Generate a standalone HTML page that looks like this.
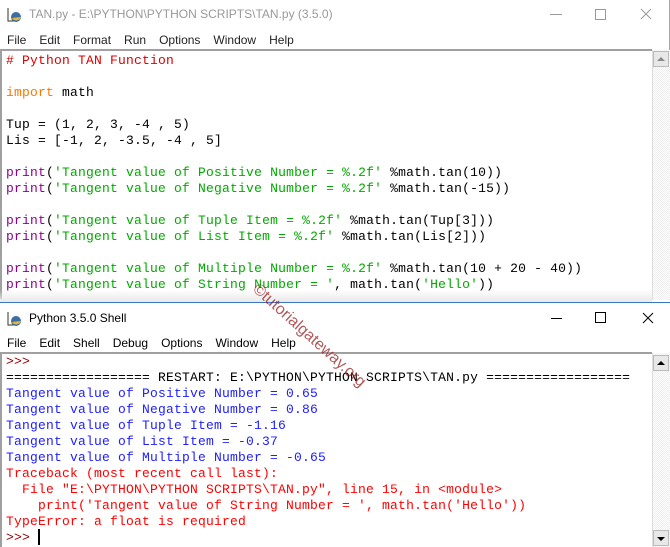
<!DOCTYPE html>
<html><head><meta charset="utf-8"><style>
*{margin:0;padding:0;box-sizing:border-box}
body{width:670px;height:547px;overflow:hidden;background:#fff;position:relative;font-family:"Liberation Sans",sans-serif}
.abs{position:absolute}
.title{font-size:12px;white-space:nowrap}
.menu{font-size:12px;white-space:nowrap}
.menu span{margin-right:13px}
.code{font-family:"Liberation Mono",monospace;font-size:13px;letter-spacing:0.2px;white-space:pre;line-height:16px}
.k{color:#ff7700}.s{color:#00aa00}.b{color:#900090}.c{color:#dd0000}
.o{color:#2020ff}.e{color:#ff0000}.p{color:#a00000}
.sb{background:repeating-conic-gradient(#eee 0 25%,#fff 0 50%) 0 0/2px 2px;border-left:1px solid #ddd}
.btn{background:#e8e8e8;border:1px solid #bbb;width:16px;height:16px}
</style></head><body>
<div class="abs" style="left:0;top:0;width:670px;height:300px;background:#fff;border-right:1px solid #aaa"></div>
<svg class="abs" style="left:6px;top:6px" width="16" height="18"><path d="M2 2 L2 15 L9 15" stroke="#333" fill="none"/><circle cx="10" cy="11" r="5" fill="#3a6ea5"/><path d="M6 12 A5 5 0 0 0 15 11 Z" fill="#e8b830"/></svg>
<div class="abs title" style="left:29px;top:7px;color:#999">TAN.py - E:\PYTHON\PYTHON SCRIPTS\TAN.py (3.5.0)</div>
<div class="abs" style="left:550px;top:14px;width:12px;height:1px;background:#999"></div>
<div class="abs" style="left:595px;top:9px;width:11px;height:11px;border:1px solid #999"></div>
<svg class="abs" style="left:640px;top:8px" width="12" height="12"><path d="M1 1L11 11M11 1L1 11" stroke="#999"/></svg>
<div class="abs menu" style="left:7px;top:33px;color:#222"><span>File</span><span>Edit</span><span>Format</span><span>Run</span><span>Options</span><span>Window</span><span>Help</span></div>
<div class="abs" style="left:0;top:49px;width:652px;height:2px;background:#a0a0a0"></div>
<div class="abs" style="left:0;top:49px;width:2px;height:250px;background:#a0a0a0"></div>
<div class="abs sb" style="left:652px;top:50px;width:18px;height:250px"></div>
<div class="abs btn" style="left:653px;top:51px"></div>
<svg class="abs" style="left:656px;top:56px" width="10" height="6"><path d="M1 5L5 1L9 5Z" fill="#888"/></svg>
<div class="abs code" style="left:6px;top:53px"><span class="c"># Python TAN Function</span>

<span class="k">import</span> math

Tup = (1, 2, 3, -4 , 5)
Lis = [-1, 2, -3.5, -4 , 5]

<span class="b">print</span>(<span class="s">'Tangent value of Positive Number = %.2f'</span> %math.tan(10))
<span class="b">print</span>(<span class="s">'Tangent value of Negative Number = %.2f'</span> %math.tan(-15))

<span class="b">print</span>(<span class="s">'Tangent value of Tuple Item = %.2f'</span> %math.tan(Tup[3]))
<span class="b">print</span>(<span class="s">'Tangent value of List Item = %.2f'</span> %math.tan(Lis[2]))

<span class="b">print</span>(<span class="s">'Tangent value of Multiple Number = %.2f'</span> %math.tan(10 + 20 - 40))
<span class="b">print</span>(<span class="s">'Tangent value of String Number = '</span>, math.tan(<span class="s">'Hello'</span>))</div>
<div class="abs" style="left:0;top:290px;width:652px;height:12px;background:linear-gradient(rgba(255,255,255,0),#e8e8e8)"></div>
<div class="abs" style="left:0;top:302px;width:670px;height:245px;background:#fff;border-top:1px solid #3b78c4"></div>
<svg class="abs" style="left:6px;top:310px" width="16" height="18"><path d="M2 2 L2 15 L9 15" stroke="#333" fill="none"/><circle cx="10" cy="11" r="5" fill="#3a6ea5"/><path d="M6 12 A5 5 0 0 0 15 11 Z" fill="#e8b830"/></svg>
<div class="abs title" style="left:29px;top:311px;color:#000">Python 3.5.0 Shell</div>
<div class="abs" style="left:551px;top:318px;width:11px;height:1px;background:#000"></div>
<div class="abs" style="left:595px;top:312px;width:11px;height:11px;border:1px solid #000"></div>
<svg class="abs" style="left:642px;top:312px" width="12" height="12"><path d="M1 1L11 11M11 1L1 11" stroke="#000"/></svg>
<div class="abs menu" style="left:7px;top:336px;color:#000"><span>File</span><span>Edit</span><span>Shell</span><span>Debug</span><span>Options</span><span>Window</span><span>Help</span></div>
<div class="abs" style="left:0;top:352px;width:652px;height:2px;background:#a0a0a0"></div>
<div class="abs" style="left:0;top:352px;width:2px;height:195px;background:#a0a0a0"></div>
<div class="abs sb" style="left:652px;top:353px;width:18px;height:194px"></div>
<div class="abs btn" style="left:653px;top:355px"></div>
<svg class="abs" style="left:656px;top:360px" width="10" height="6"><path d="M1 5L5 1L9 5Z" fill="#000"/></svg>
<div class="abs btn" style="left:653px;top:530px"></div>
<svg class="abs" style="left:656px;top:536px" width="10" height="6"><path d="M1 1L5 5L9 1Z" fill="#000"/></svg>
<div class="abs code" style="left:6px;top:354px"><span class="p">&gt;&gt;&gt;</span>
================== RESTART: E:\PYTHON\PYTHON SCRIPTS\TAN.py ==================
<span class="o">Tangent value of Positive Number = 0.65
Tangent value of Negative Number = 0.86
Tangent value of Tuple Item = -1.16
Tangent value of List Item = -0.37
Tangent value of Multiple Number = -0.65</span>
<span class="e">Traceback (most recent call last):
  File "E:\PYTHON\PYTHON SCRIPTS\TAN.py", line 15, in &lt;module&gt;
    print('Tangent value of String Number = ', math.tan('Hello'))
TypeError: a float is required</span>
<span class="p">&gt;&gt;&gt;</span> </div>
<div class="abs" style="left:38px;top:529px;width:2px;height:16px;background:#000"></div>
<div class="abs" style="left:236px;top:327px;font-size:16px;color:rgba(150,30,30,0.75);transform:rotate(42deg);transform-origin:center;white-space:nowrap;font-family:'Liberation Sans',sans-serif">©tutorialgateway.org</div>
</body></html>
